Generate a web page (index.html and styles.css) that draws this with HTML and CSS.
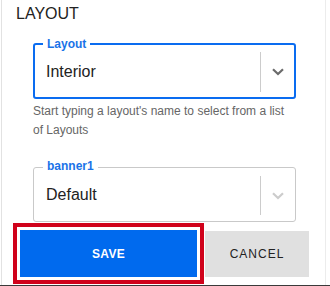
FILE: index.html
```html
<!DOCTYPE html>
<html>
<head>
<meta charset="utf-8">
<link rel="stylesheet" href="styles.css">
</head>
<body>
<div class="panel">
  <div class="heading">LAYOUT</div>
  <div class="field field-active">
    <span class="field-label">Layout</span>
    <div class="field-value">Interior</div>
    <div class="indicator">
      <span class="sep"></span>
      <svg class="chev" width="12" height="8" viewBox="0 0 12 8"><polyline points="1,1.2 6,6 11,1.2" fill="none" stroke="currentColor" stroke-width="2.2"/></svg>
    </div>
  </div>
  <div class="helper">Start typing a layout's name to select from a list of Layouts</div>
  <div class="field field-idle">
    <span class="field-label">banner1</span>
    <div class="field-value">Default</div>
    <div class="indicator">
      <span class="sep"></span>
      <svg class="chev" width="12" height="8" viewBox="0 0 12 8"><polyline points="1,1.2 6,6 11,1.2" fill="none" stroke="currentColor" stroke-width="2.2"/></svg>
    </div>
  </div>
  <div class="actions">
    <button class="btn btn-save">SAVE</button>
    <button class="btn btn-cancel">CANCEL</button>
  </div>
</div>
<div class="bottom-line"></div>
</body>
</html>
```
FILE: styles.css
```css
html, body {
  margin: 0;
  padding: 0;
  background: #ffffff;
}
body {
  width: 330px;
  height: 286px;
  overflow: hidden;
  font-family: "Liberation Sans", Arial, sans-serif;
  position: relative;
}
.panel {
  margin-left: 1px;
  width: 325px;
  height: 285px;
  border-left: 1px solid #e2e2e2;
  border-right: 1px solid #ececec;
  padding-left: 14px;
  box-sizing: border-box;
  padding-top: 4px;
}
.heading {
  font-size: 16px;
  line-height: 20px;
  color: #222222;
}
.field {
  position: relative;
  margin-left: 17px;
  width: 263px;
  box-sizing: border-box;
  display: flex;
  align-items: center;
  border-radius: 3px;
}
.field-active {
  margin-top: 19px;
  height: 56px;
  border: 2px solid #0a6cf0;
  padding-left: 11px;
}
.field-idle {
  margin-top: 27px;
  height: 55px;
  border: 1px solid #c9c9c9;
  padding-left: 12px;
}
.field-label {
  position: absolute;
  top: -10px;
  background: #ffffff;
  padding: 0 4px;
  font-size: 12px;
  line-height: 14px;
  font-weight: bold;
  color: #1a73e8;
}
.field-active .field-label {
  left: 8px;
  top: -8px;
}
.field-idle .field-label {
  left: 9px;
  top: -9px;
}
.field-value {
  flex: 1;
  font-size: 16px;
  color: #222222;
}
.field-active .field-value {
  padding-top: 1px;
}
.field-idle .field-value {
  padding-top: 1px;
}
.indicator {
  display: flex;
  align-items: center;
  height: 100%;
}
.sep {
  width: 1px;
  background: #cccccc;
  align-self: center;
}
.field-active .sep {
  height: 40px;
  margin-top: 2px;
}
.field-idle .sep {
  height: 39px;
  margin-top: 2px;
}
.chev {
  display: block;
  margin-left: 11px;
  margin-right: 10px;
}
.field-active .chev {
  color: #6b6b6b;
  margin-top: 1px;
}
.field-idle .chev {
  color: #cccccc;
  margin-top: 3px;
  margin-right: 11px;
}
.helper {
  margin-left: 17px;
  margin-top: 3px;
  width: 263px;
  font-size: 12px;
  line-height: 19px;
  color: #666666;
}
.actions {
  display: flex;
  margin-top: 8px;
  margin-left: 4px;
  gap: 8px;
}
.btn {
  border: none;
  height: 47px;
  font-family: "Liberation Sans", Arial, sans-serif;
  font-size: 12px;
  letter-spacing: 1px;
  padding: 0;
  cursor: pointer;
}
.btn-save {
  width: 177px;
  background: #006aee;
  color: #ffffff;
  font-weight: bold;
  letter-spacing: 0.3px;
  outline: 4px solid #d0021b;
  outline-offset: 3px;
}
.btn-cancel {
  width: 104px;
  background: #e0e0e0;
  color: #222222;
  margin-top: 1px;
  height: 46px;
}
.bottom-line {
  height: 1px;
  width: 330px;
  background: #3a3a3a;
}
```
